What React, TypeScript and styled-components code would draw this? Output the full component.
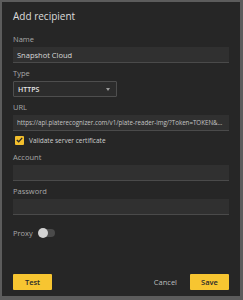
import React from "react";
import styled, { createGlobalStyle } from "styled-components";

const GlobalStyle = createGlobalStyle`
  html, body {
    margin: 0;
    padding: 0;
    background: #5c5c5c;
  }
  body {
    font-family: "Open Sans", "DejaVu Sans", sans-serif;
  }
`;

const Frame = styled.div`
  width: 243px;
  height: 300px;
  box-sizing: border-box;
  padding: 2px 3px 4px 2px;
`;

const Dialog = styled.div`
  height: 100%;
  box-sizing: border-box;
  background: #262626;
  padding: 6px 11px 6px 11px;
  display: flex;
  flex-direction: column;
`;

const Title = styled.h1`
  margin: 0 0 9px 0;
  font-size: 10px;
  font-weight: 400;
  color: #dcdcdc;
  line-height: 16px;
`;

const Field = styled.div<{ $last?: boolean }>`
  display: flex;
  flex-direction: column;
  margin-bottom: ${(p) => (p.$last ? "0" : "4px")};
`;

const Label = styled.label`
  font-size: 7.5px;
  color: #a8a8a8;
  line-height: 12px;
  margin-bottom: 2px;
`;

const TextBox = styled.div<{ $small?: boolean }>`
  height: 16px;
  box-sizing: border-box;
  background: #303030;
  border-bottom: 1px solid #4a4a4a;
  padding: 0 4px;
  display: flex;
  align-items: center;
  font-size: ${(p) => (p.$small ? "6.2px" : "7.5px")};
  color: ${(p) => (p.$small ? "#c4c4c4" : "#d8d8d8")};
  white-space: nowrap;
  overflow: hidden;
`;

const Ellipsis = styled.span`
  overflow: hidden;
  text-overflow: ellipsis;
`;

const Select = styled.div`
  width: 104px;
  height: 16px;
  box-sizing: border-box;
  background: #2c2c2c;
  border: 1px solid #4e4e4e;
  border-radius: 1px;
  padding: 0 6px 0 4px;
  display: flex;
  align-items: center;
  justify-content: space-between;
  font-size: 7px;
  font-weight: 600;
  color: #e6e6e6;
`;

const CheckRow = styled.div`
  display: flex;
  align-items: center;
  height: 10px;
  gap: 5px;
  margin: 4px 0 6px 2px;
  font-size: 6.5px;
  color: #cfcfcf;
`;

const Check = styled.span`
  width: 9px;
  height: 9px;
  border-radius: 1px;
  background: #f3bf2d;
  display: flex;
  align-items: center;
  justify-content: center;
`;

const ToggleRow = styled.div`
  display: flex;
  align-items: center;
  height: 10px;
  gap: 6px;
  margin: 9px 0 0 0;
  font-size: 7.5px;
  color: #a8a8a8;
`;

const Track = styled.span`
  position: relative;
  width: 16px;
  height: 8px;
  border-radius: 4px;
  background: #4a4a4a;
`;

const Knob = styled.span`
  position: absolute;
  left: -1px;
  top: -1px;
  width: 10px;
  height: 10px;
  border-radius: 50%;
  background: #d2d2d2;
`;

const Footer = styled.div`
  margin-top: auto;
  display: flex;
  align-items: center;
`;

const Button = styled.button`
  width: 39px;
  height: 16px;
  border: 0;
  border-radius: 1px;
  background: #f7c531;
  color: #2a2a2a;
  font-family: inherit;
  font-size: 7.5px;
  font-weight: 600;
  padding: 0;
`;

const TextButton = styled.button`
  margin-left: auto;
  margin-right: 13px;
  border: 0;
  background: transparent;
  color: #bcbcbc;
  font-family: inherit;
  font-size: 7.5px;
  padding: 0;
`;

export default function App() {
  return (
    <Frame>
      <GlobalStyle />
      <Dialog>
        <Title>Add recipient</Title>
        <Field>
          <Label>Name</Label>
          <TextBox>Snapshot Cloud</TextBox>
        </Field>
        <Field>
          <Label>Type</Label>
          <Select>
            <span>HTTPS</span>
            <svg width="4" height="3" viewBox="0 0 4 3">
              <path d="M0 0 L4 0 L2 3 Z" fill="#9a9a9a" />
            </svg>
          </Select>
        </Field>
        <Field $last>
          <Label>URL</Label>
          <TextBox $small>
            <Ellipsis>https://api.platerecognizer.com/v1/plate-reader-img/?Token=TOKEN&amp;camera_id=1</Ellipsis>
          </TextBox>
        </Field>
        <CheckRow>
          <Check>
            <svg width="7" height="6" viewBox="0 0 7 6">
              <path d="M0.8 3 L2.7 4.8 L6.2 0.9" fill="none" stroke="#2a2a2a" strokeWidth="1.3" />
            </svg>
          </Check>
          Validate server certificate
        </CheckRow>
        <Field>
          <Label>Account</Label>
          <TextBox />
        </Field>
        <Field>
          <Label>Password</Label>
          <TextBox />
        </Field>
        <ToggleRow>
          Proxy
          <Track>
            <Knob />
          </Track>
        </ToggleRow>
        <Footer>
          <Button>Test</Button>
          <TextButton>Cancel</TextButton>
          <Button>Save</Button>
        </Footer>
      </Dialog>
    </Frame>
  );
}
